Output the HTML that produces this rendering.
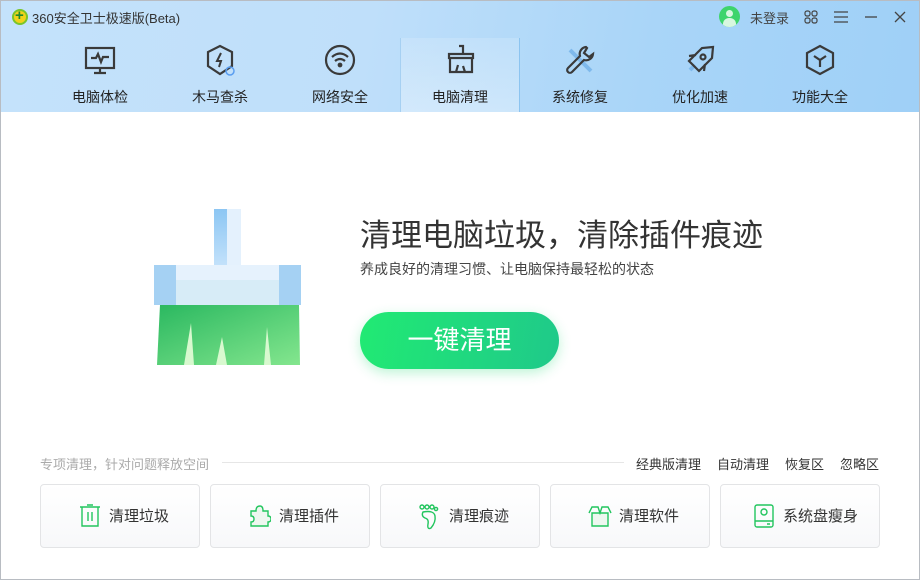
<!DOCTYPE html>
<html><head><meta charset="utf-8"><style>
*{margin:0;padding:0;box-sizing:border-box}
body{width:920px;height:580px;overflow:hidden;font-family:"Liberation Sans","Noto Sans CJK SC",sans-serif;background:#fff;position:relative}
.win{position:absolute;inset:0;border:1px solid #b8bcc2}
.hdr{position:absolute;left:0;top:0;width:920px;height:112px;background:linear-gradient(100deg,#c4e2fb 0%,#bfdffa 40%,#a9d5f8 70%,#9fd0f7 100%);}
.title{position:absolute;left:32px;top:8px;font-size:13px;color:#333}
.logo{position:absolute;left:12px;top:9px;width:16px;height:16px;border-radius:50%;background:#f1d21a;border:2px solid #7ac52b}
.logo:after{content:"+";position:absolute;left:1px;top:-4px;color:#1e8a2e;font-weight:bold;font-size:15px}
.tab{position:absolute;top:38px;width:120px;height:74px;text-align:center}
.tab svg{position:absolute;left:44px;top:6px}
.tab span{position:absolute;left:0;right:0;top:49px;font-size:14px;color:#222}
.act{background:linear-gradient(180deg,rgba(255,255,255,.15),rgba(255,255,255,.35));border-left:1px solid #a6d0f2;border-right:1px solid #8cc4f0}
.tr{position:absolute;top:8px;font-size:13px;color:#444}
h1{position:absolute;left:360px;top:210px;font-size:31px;font-weight:normal;color:#333;letter-spacing:0px}
.sub{position:absolute;left:360px;top:259px;font-size:14px;color:#444}
.btn{position:absolute;left:360px;top:312px;width:199px;height:57px;border-radius:29px;background:linear-gradient(100deg,#21ea73,#1fc98a);color:#fff;font-size:26px;text-align:center;line-height:57px;box-shadow:0 4px 12px rgba(40,220,120,.3)}
.sec{position:absolute;left:40px;top:454px;font-size:13px;color:#aaa}
.line{position:absolute;left:222px;top:462px;width:402px;height:1px;background:#e6e6e6}
.lk{position:absolute;top:454px;font-size:13px;color:#333}
.card{position:absolute;top:484px;width:160px;height:64px;border:1px solid #e3e4e6;border-radius:4px;background:linear-gradient(#fff,#f7f8fa);font-size:15px;color:#333}
.card svg{position:absolute;top:19px}
.card span{position:absolute;top:20px}
</style></head><body>
<div class="hdr">
<div class="logo"></div>
<div class="title">360安全卫士极速版(Beta)</div>
<div style="position:absolute;left:719px;top:6px;width:21px;height:21px;border-radius:50%;background:#3ed46b;overflow:hidden"><div style="position:absolute;left:7px;top:4px;width:7px;height:7px;border-radius:50%;background:#d8f7df"></div><div style="position:absolute;left:4px;top:12px;width:13px;height:10px;border-radius:6px 6px 0 0;background:#d8f7df"></div></div>
<div class="tr" style="left:750px">未登录</div>
<svg style="position:absolute;left:804px;top:10px" width="14" height="14" fill="none" stroke="#444" stroke-width="1.2"><rect x="1" y="1" width="5" height="5" rx="2"/><rect x="8" y="1" width="5" height="5" rx="2"/><rect x="1" y="8" width="5" height="5" rx="2"/><rect x="8" y="8" width="5" height="5" rx="2"/></svg>
<svg style="position:absolute;left:833px;top:10px" width="16" height="14" stroke="#444" stroke-width="1.3"><path d="M1 2H15M1 7H15M1 12H15"/></svg>
<svg style="position:absolute;left:864px;top:10px" width="14" height="14" stroke="#444" stroke-width="1.3"><path d="M1 7H13"/></svg>
<svg style="position:absolute;left:893px;top:10px" width="14" height="14" stroke="#444" stroke-width="1.3"><path d="M2 2L12 12M12 2L2 12"/></svg>

<div class="tab" style="left:40px"><svg width="32" height="32" fill="none" stroke="#3a3a3a" stroke-width="2.2"><rect x="2" y="4" width="28" height="20"/><path d="M10 29H22M16 24V29M7 14H12L14 10L17 18L19 13H25"/></svg><span>电脑体检</span></div>
<div class="tab" style="left:160px"><svg width="32" height="32" fill="none" stroke="#3a3a3a" stroke-width="2.2"><path d="M16 2L28 8V22L16 30L4 22V8Z"/><path d="M17 9L13 17H17L15 23" stroke-width="2"/><circle cx="26" cy="27" r="4" stroke="#5a9ef0" stroke-width="1.5"/></svg><span>木马查杀</span></div>
<div class="tab" style="left:280px"><svg width="32" height="32" fill="none" stroke="#3a3a3a" stroke-width="2.2"><circle cx="16" cy="16" r="14"/><path d="M8 13Q16 6 24 13M11 17Q16 13 21 17"/><circle cx="16" cy="21" r="1.3" fill="#3a3a3a"/></svg><span>网络安全</span></div>
<div class="tab act" style="left:400px"><svg width="32" height="32" fill="none" stroke="#3a3a3a" stroke-width="2.2"><path d="M14 2H18V10M4 10H28V14H4ZM5 14V28H27V14M11 28L13 21M20 28L18 22"/></svg><span>电脑清理</span></div>
<div class="tab" style="left:520px"><svg width="32" height="32" fill="none" stroke="#3a3a3a" stroke-width="2.2"><path d="M6 6L27 27" stroke="#7fb9ec" stroke-width="4"/><path d="M22 3A7 7 0 0 0 16 12L4 24A2.5 2.5 0 0 0 8 28L20 16A7 7 0 0 0 29 10L25 13L20 9L23 4Z"/></svg><span>系统修复</span></div>
<div class="tab" style="left:640px"><svg width="32" height="32" fill="none" stroke="#3a3a3a" stroke-width="2.2"><path d="M6 26L11 21" stroke="#7fb9ec" stroke-width="4"/><path d="M29 3L28 14L15 27L12 24L8 20L5 17L18 4Z M12 11L5 12M21 20L20 27"/><circle cx="19" cy="13" r="2.5"/></svg><span>优化加速</span></div>
<div class="tab" style="left:760px"><svg width="32" height="32" fill="none" stroke="#3a3a3a" stroke-width="2.2"><path d="M16 2L29 9V23L16 30L3 23V9Z"/><path d="M10 12L16 16L22 12M16 16V23"/></svg><span>功能大全</span></div>
</div>

<svg style="position:absolute;left:154px;top:209px" width="148" height="157">
<defs><linearGradient id="g" x1="0" x2="1" y1="0" y2="1"><stop offset="0" stop-color="#2ab860"/><stop offset="1" stop-color="#84e68e"/></linearGradient>
<linearGradient id="h" x1="0" x2="0" y1="0" y2="1"><stop offset="0" stop-color="#8cc6f3"/><stop offset="1" stop-color="#c4e2fb"/></linearGradient></defs>
<rect x="60" y="0" width="27" height="58" fill="#e4f1fd"/><rect x="60" y="0" width="13" height="58" fill="url(#h)"/>
<path d="M6 96H145L146 156H3Z" fill="url(#g)"/>
<path d="M30 156L37 114L40 156ZM62 156L68 128L73 156ZM110 156L113 118L117 156Z" fill="#d8f9cf"/>
<rect x="0" y="56" width="147" height="40" fill="#d7ecf7"/><rect x="0" y="56" width="147" height="15" fill="#e6f2fd"/>
<rect x="0" y="56" width="22" height="40" fill="#a5d1f3"/><rect x="125" y="56" width="22" height="40" fill="#a5d1f3"/>
</svg>

<h1>清理电脑垃圾，清除插件痕迹</h1>
<div class="sub">养成良好的清理习惯、让电脑保持最轻松的状态</div>
<div class="btn">一键清理</div>

<div class="sec">专项清理，针对问题释放空间</div>
<div class="line"></div>
<div class="lk" style="left:636px">经典版清理</div>
<div class="lk" style="left:717px">自动清理</div>
<div class="lk" style="left:785px">恢复区</div>
<div class="lk" style="left:840px">忽略区</div>

<div class="card" style="left:40px"><svg style="left:38px" width="22" height="24" fill="none" stroke="#22c55e" stroke-width="1.4"><path d="M1 3H21M8 1H14M3 3V22H19V3M9 8V17M13 8V17"/></svg><span style="left:68px">清理垃圾</span></div>
<div class="card" style="left:210px"><svg style="left:38px" width="22" height="24" fill="#eef7f0" stroke="#22c55e" stroke-width="1.4"><path d="M2 7H7Q7 2 11 2Q14 2 14 7H19V12Q22 12 22 15Q22 18 19 18V22H2V18Q5 18 5 15Q5 12 2 12Z"/></svg><span style="left:68px">清理插件</span></div>
<div class="card" style="left:380px"><svg style="left:38px" width="22" height="26" fill="none" stroke="#22c55e" stroke-width="1.4"><circle cx="3" cy="3" r="2"/><circle cx="8" cy="3" r="2"/><circle cx="13" cy="3" r="2"/><circle cx="17" cy="5" r="1.6"/><path d="M4 8Q15 6 16 12Q17 18 12 24Q8 26 9 20Q10 15 6 14Q2 12 4 8Z"/></svg><span style="left:68px">清理痕迹</span></div>
<div class="card" style="left:550px"><svg style="left:37px" width="24" height="24" fill="#eef7f0" stroke="#22c55e" stroke-width="1.4"><path d="M4 9H20V22H4Z"/><path d="M1 9L4 3H10L12 9L14 3H20L23 9" fill="none"/></svg><span style="left:68px">清理软件</span></div>
<div class="card" style="left:720px"><svg style="left:32px" width="22" height="24" fill="none" stroke="#22c55e" stroke-width="1.4"><rect x="2" y="1" width="18" height="22" rx="2"/><circle cx="11" cy="8" r="3"/><path d="M2 17H20M14 20H17"/></svg><span style="left:62px">系统盘瘦身</span></div>
<div class="win"></div>
</body></html>
